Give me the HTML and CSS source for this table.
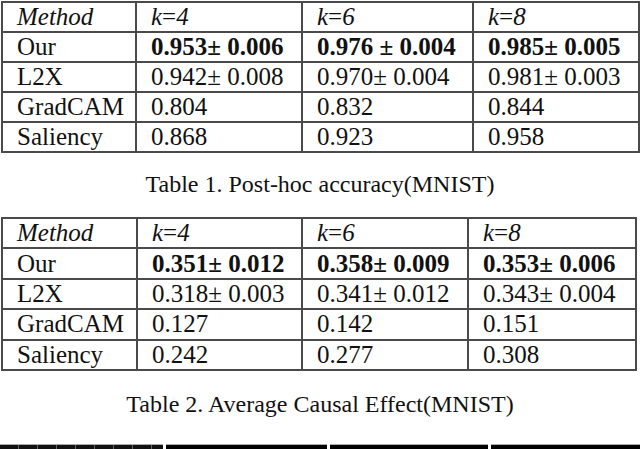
FILE: index.html
```html
<!DOCTYPE html>
<html>
<head>
<meta charset="utf-8">
<link rel="stylesheet" href="styles.css">
</head>
<body>
<div class="page">
  <table class="tbl t1">
    <colgroup><col class="c1"><col class="c2"><col class="c3"><col class="c4"></colgroup>
    <tr><td><i>Method</i></td><td><i>k</i>=<i>4</i></td><td><i>k</i>=<i>6</i></td><td><i>k</i>=<i>8</i></td></tr>
    <tr><td>Our</td><td><b>0.953± 0.006</b></td><td><b>0.976 ± 0.004</b></td><td><b>0.985± 0.005</b></td></tr>
    <tr><td>L2X</td><td>0.942± 0.008</td><td>0.970± 0.004</td><td>0.981± 0.003</td></tr>
    <tr><td>GradCAM</td><td>0.804</td><td>0.832</td><td>0.844</td></tr>
    <tr><td>Saliency</td><td>0.868</td><td>0.923</td><td>0.958</td></tr>
  </table>
  <p class="caption cap1">Table 1. Post-hoc accuracy(MNIST)</p>
  <table class="tbl t2">
    <colgroup><col class="d1"><col class="d2"><col class="d3"><col class="d4"></colgroup>
    <tr><td><i>Method</i></td><td><i>k</i>=<i>4</i></td><td><i>k</i>=<i>6</i></td><td><i>k</i>=<i>8</i></td></tr>
    <tr><td>Our</td><td><b>0.351± 0.012</b></td><td><b>0.358± 0.009</b></td><td><b>0.353± 0.006</b></td></tr>
    <tr><td>L2X</td><td>0.318± 0.003</td><td>0.341± 0.012</td><td>0.343± 0.004</td></tr>
    <tr><td>GradCAM</td><td>0.127</td><td>0.142</td><td>0.151</td></tr>
    <tr><td>Saliency</td><td>0.242</td><td>0.277</td><td>0.308</td></tr>
  </table>
  <p class="caption cap2">Table 2. Average Causal Effect(MNIST)</p>
  <div class="strip">
    <div class="seg seg1"></div>
    <div class="seg seg2"></div>
    <div class="seg seg3"></div>
    <div class="seg seg4"></div>
  </div>
</div>
</body>
</html>
```
FILE: styles.css
```css
html, body {
  margin: 0;
  padding: 0;
  background: #fff;
}
.page {
  width: 640px;
  height: 449px;
  overflow: hidden;
  font-family: "Liberation Serif", "Times New Roman", serif;
  color: #111;
  display: flex;
  flex-direction: column;
}
.tbl {
  border-collapse: collapse;
  table-layout: fixed;
  margin-left: 1px;
  font-family: "Liberation Serif", "Times New Roman", serif;
  font-size: 25px;
  flex: none;
}
.tbl td {
  font-family: "Liberation Serif", "Times New Roman", serif;
  border: 2px solid #4a4a4a;
  height: 28px;
  padding: 0 0 0 14px;
  line-height: 28px;
  white-space: nowrap;
  vertical-align: middle;
}
.tbl b { font-weight: bold; }
.t1 { margin-top: 1px; width: 637px; }
.c1 { width: 134px; }
.c2 { width: 166px; }
.c3 { width: 171px; }
.c4 { width: 166px; }
.t2 { width: 634px; }
.t2 td { height: 28.4px; }
.d1 { width: 135px; }
.d2 { width: 165px; }
.d3 { width: 166px; }
.d4 { width: 168px; }
.caption {
  margin: 0;
  text-align: center;
  font-family: "Liberation Serif", "Times New Roman", serif;
  font-size: 24px;
  line-height: 26px;
  color: #111;
  flex: none;
}
.cap1 { margin-top: 18px; margin-bottom: 20px; }
.cap2 { margin-top: 20px; }
.strip {
  margin-top: 27px;
  display: flex;
  gap: 3px;
  height: 8px;
  flex: none;
}
.seg { background: #000; border-top: 1px solid #aaa; }
.seg1 { width: 163px; background: repeating-linear-gradient(90deg, #111 0 18px, #666 18px 19px); }
.seg2 { width: 161px; }
.seg3 { width: 158px; }
.seg4 { flex: 1; }
```
